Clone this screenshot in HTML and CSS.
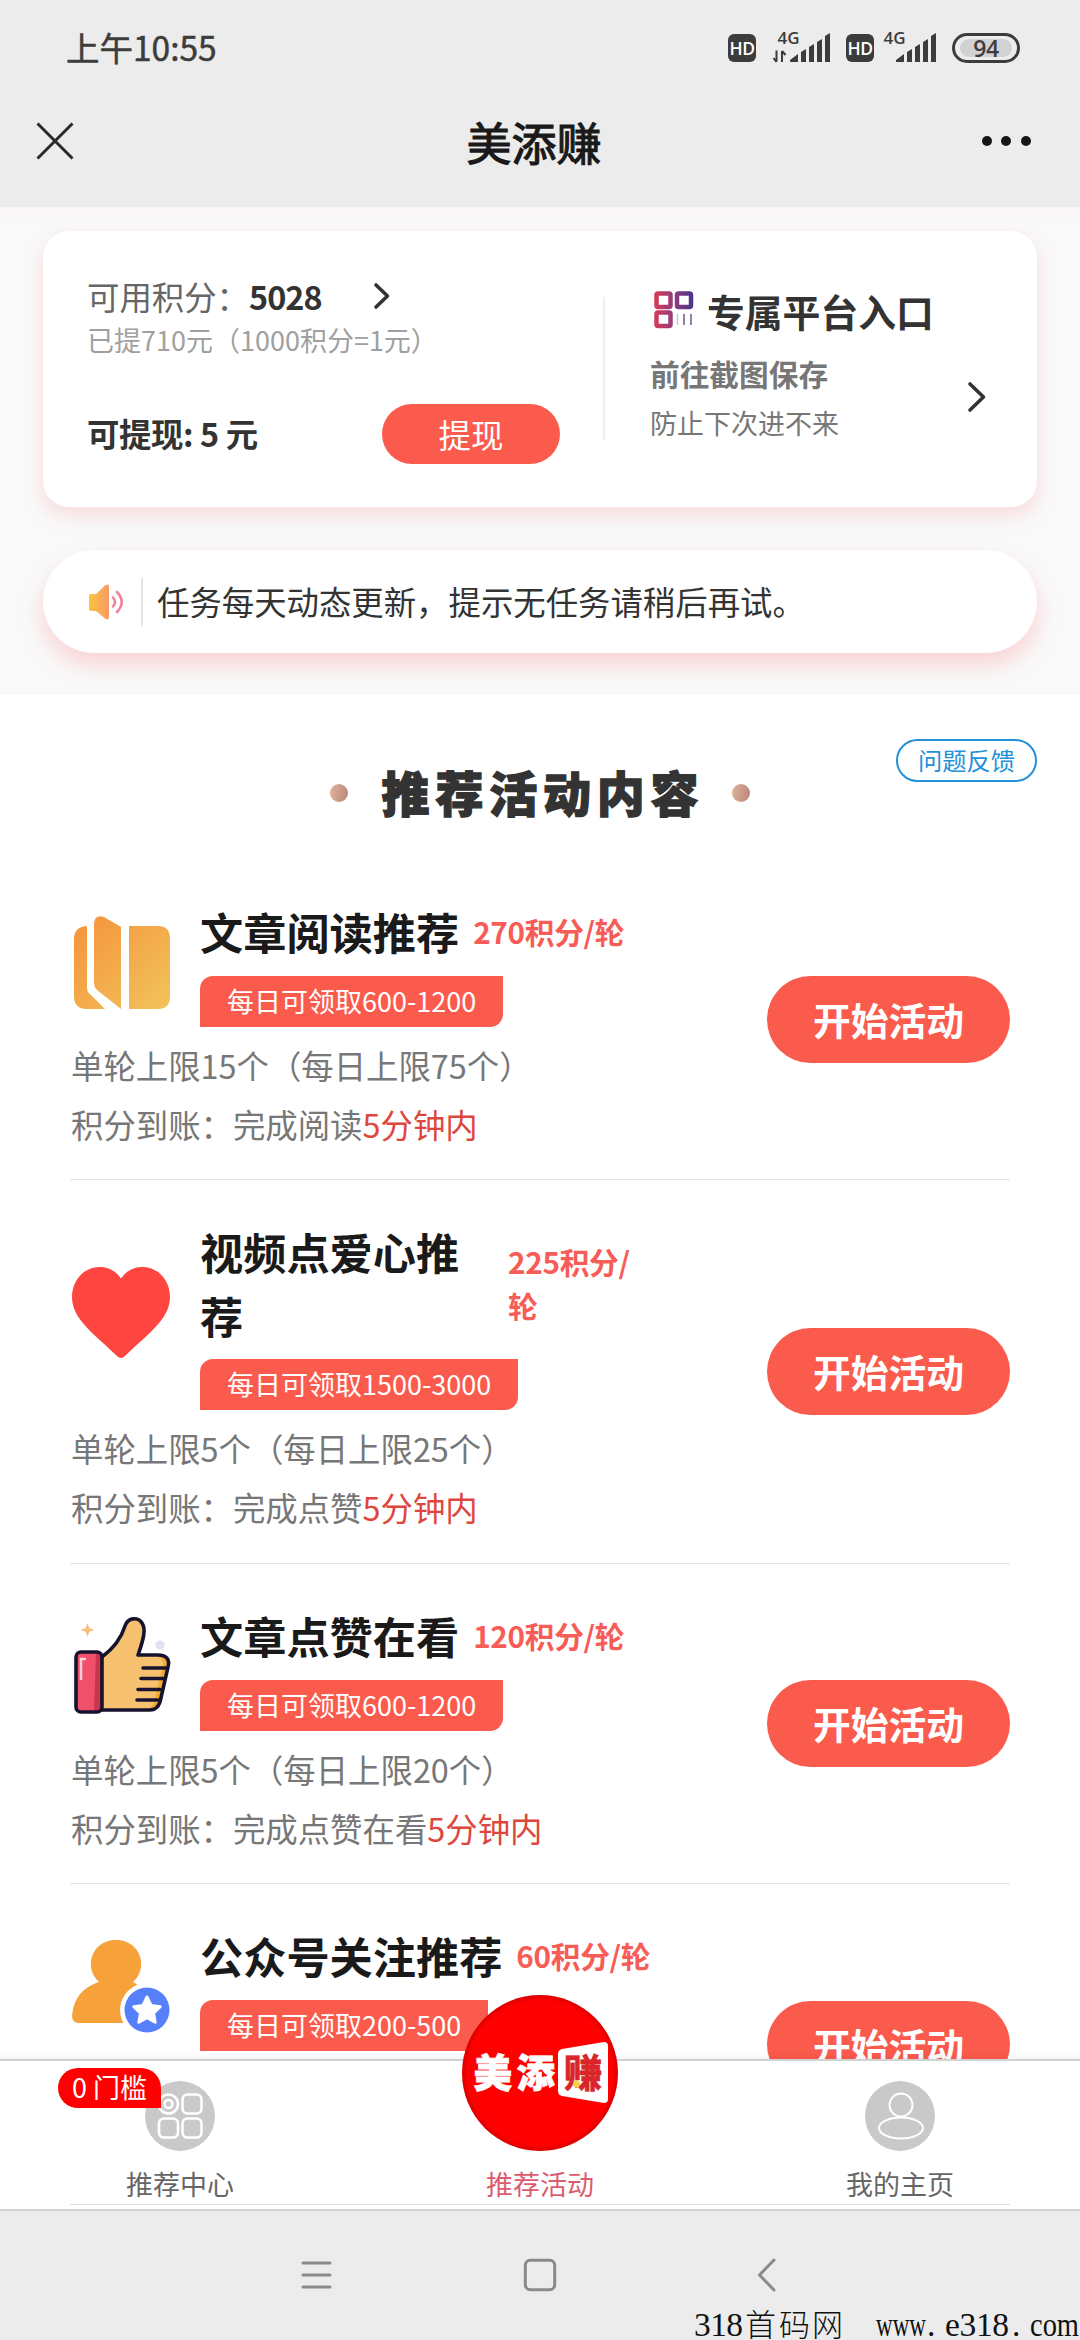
FILE: index.html
```html
<!DOCTYPE html>
<html lang="zh-CN">
<head>
<meta charset="utf-8">
<title>美添赚</title>
<link rel="stylesheet" href="styles.css">
</head>
<body>
<div class="statusbar">
  <span class="clock">上午10:55</span>
  <div class="status-icons">
    <span class="hd">HD</span>
    <svg class="signal" width="62" height="36" viewBox="0 0 62 36">
      <text x="7.500" y="13.500" class="net">4G</text>
      <path d="M6.500 20.500v11M3.500 28l3 4M12 32v-11M15.500 25l-3.500-4" class="arrows"/>
      <path d="M20 32v-2l8-6v8zM31 32v-10l5-3v13zM39 32v-15l5-3v18zM47 32v-20l5-3v23zM55 32v-26l5-3v29z" class="bars"/>
    </svg>
    <span class="hd">HD</span>
    <svg class="signal last" width="62" height="36" viewBox="0 0 62 36">
      <text x="9.500" y="13.500" class="net">4G</text>
      <path d="M22 32v-2l8-6v8zM33 32v-10l5-3v13zM41 32v-15l5-3v18zM49 32v-20l5-3v23zM57 32v-26l5-3v29z" class="bars"/>
    </svg>
    <span class="battery"><span class="level">94</span></span>
  </div>
</div>
<header class="navbar">
  <svg width="38" height="38" viewBox="0 0 38 38"><path d="M1.500 1.500l35 35M36.500 1.500l-35 35" class="close"/></svg>
  <h1>美添赚</h1>
  <div class="dots"><i></i><i></i><i></i></div>
</header>
<section class="hero">
  <div class="card">
    <div class="wallet">
      <div class="points">可用积分：<b>5028</b>
        <svg width="16" height="26" viewBox="0 0 16 26"><path d="M2 2l11.500 11L2 24" class="chev"/></svg>
      </div>
      <div class="taken">已提710元（1000积分=1元）</div>
      <div class="cash"><b>可提现: 5 元</b><button class="withdraw">提现</button></div>
    </div>
    <div class="entry">
      <div>
        <div class="entry-title">
          <svg width="40" height="38" viewBox="0 0 40 38">
            <defs><linearGradient id="qr" gradientUnits="userSpaceOnUse" x1="0" y1="0" x2="40" y2="0"><stop offset="0" stop-color="#d83a55"/><stop offset=".5" stop-color="#8f3c7c"/><stop offset="1" stop-color="#46368c"/></linearGradient></defs>
            <g fill="none" stroke="url(#qr)" stroke-width="4.500"><rect x="2.500" y="2.500" width="14" height="13.500" rx="1.500"/><rect x="23" y="2.500" width="14" height="13.500" rx="1.500"/><rect x="2.500" y="21.500" width="14" height="13.500" rx="1.500"/></g>
            <path d="M23.500 23v11" stroke="#c9c3d8" stroke-width="1.500"/><path d="M30 23v11M37 23v11" stroke="#6d5a8e" stroke-width="1.500"/>
          </svg>专属平台入口</div>
        <div class="entry-sub">前往截图保存</div>
        <div class="entry-note">防止下次进不来</div>
      </div>
      <svg class="go" width="18" height="30" viewBox="0 0 18 30"><path d="M2 2l13.500 13L2 28" class="chev"/></svg>
    </div>
  </div>
  <div class="notice">
    <svg width="36" height="36" viewBox="0 0 36 36">
      <defs><linearGradient id="spk"><stop offset="0" stop-color="#fcc33c"/><stop offset="1" stop-color="#f99a68"/></linearGradient></defs>
      <path d="M2 10h5L16 1.500Q20-1 20 3v30q0 4-4 1.500L7 27H2q-2 0-2-2V12q0-2 2-2z" fill="url(#spk)"/>
      <path d="M24 13.500q4 4.500 0 9M28 8q9.500 10 0 20" fill="none" stroke="#f0829c" stroke-width="2.600" stroke-linecap="round"/>
    </svg>
    <p>任务每天动态更新，提示无任务请稍后再试。</p>
  </div>
</section>
<main>
  <div class="section-head">
    <i class="bead"></i><h2>推荐活动内容</h2><i class="bead"></i>
    <a class="feedback">问题反馈</a>
  </div>
  <article class="task">
    <div class="info">
      <div class="top">
        <svg class="ico" viewBox="0 0 98 98">
          <defs><linearGradient id="bk" gradientUnits="userSpaceOnUse" x1="0" y1="0" x2="98" y2="98"><stop offset="0" stop-color="#f6903a"/><stop offset="1" stop-color="#f1c45c"/></linearGradient></defs>
          <g fill="url(#bk)"><path d="M15 13v62q0 4 3 6l15 15H15Q2 96 2 83V26q0-12 13-13z"/><path d="M22 12q0-11 10-8l17 10v82L25 77q-3-3-3-7z"/><path d="M57 13h29q12 0 12 13v57q0 13-12 13H57z"/></g>
        </svg>
        <div class="desc">
          <div class="name"><h3>文章阅读推荐</h3><span class="reward">270积分/轮</span></div>
          <span class="tag">每日可领取600-1200</span>
        </div>
      </div>
      <p>单轮上限15个（每日上限75个）</p>
      <p>积分到账：完成阅读<em>5分钟内</em></p>
    </div>
    <button class="start">开始活动</button>
  </article>
  <article class="task">
    <div class="info">
      <div class="top">
        <svg class="ico" viewBox="0 0 98 98"><path d="M49 14.500C44 7 36 3 28 3 11 3 0 17 0 33 0 56 24 71 45 92q4 4 8 0C74 71 98 56 98 33 98 17 87 3 70 3 62 3 54 7 49 14.500z" fill="#fe4540"/></svg>
        <div class="desc">
          <div class="name wrap"><h3>视频点爱心推荐</h3><span class="reward">225积分/轮</span></div>
          <span class="tag">每日可领取1500-3000</span>
        </div>
      </div>
      <p>单轮上限5个（每日上限25个）</p>
      <p>积分到账：完成点赞<em>5分钟内</em></p>
    </div>
    <button class="start">开始活动</button>
  </article>
  <article class="task">
    <div class="info">
      <div class="top">
        <svg class="ico" viewBox="0 0 98 98">
          <path d="M15.500 7l1.800 5.200L22.500 14l-5.200 1.800L15.500 21l-1.800-5.200L8.500 14l5.200-1.800z" fill="#f8bd78"/><circle cx="88" cy="29" r="4.500" fill="#e2e0f2"/>
          <path d="M30 41C42 32 49 23 53 10 56 1 66 1 70 7c4 6 2 15-4 32h20c9 0 12 5 10 12l-8 35c-2 6-5 8-10 8H30z" fill="#f7c270"/>
          <path d="M78 41h8q6 1 5 8l-9 38q-2 5-8 6h6q6-1 8-8l8-36q0-8-8-8z" fill="#f1ab31"/>
          <path d="M30 41C42 32 49 23 53 10 56 1 66 1 70 7c4 6 2 15-4 32h20c9 0 12 5 10 12l-8 35c-2 6-5 8-10 8H30" class="ink"/>
          <rect x="4" y="36" width="26" height="60" rx="5" fill="#f1506a"/><path d="M24 37h3q3 1 3 5v49q0 4-4 4h-4z" fill="#c9344f"/><path d="M9 64V43h5" fill="none" stroke="#ffd0d5" stroke-width="2.500"/>
          <rect x="4" y="36" width="26" height="60" rx="5" class="ink"/>
          <path d="M71 52h23M69 62.500h22M66 73.500h22M65 84h21" class="ink"/>
        </svg>
        <div class="desc">
          <div class="name"><h3>文章点赞在看</h3><span class="reward">120积分/轮</span></div>
          <span class="tag">每日可领取600-1200</span>
        </div>
      </div>
      <p>单轮上限5个（每日上限20个）</p>
      <p>积分到账：完成点赞在看<em>5分钟内</em></p>
    </div>
    <button class="start">开始活动</button>
  </article>
  <article class="task">
    <div class="info">
      <div class="top">
        <svg class="ico" viewBox="0 0 98 98">
          <path d="M44 3a24 24 0 0 1 17 42q8 3 9 16L58 86H7q-7 0-7-7Q2 53 27 45A24 24 0 0 1 44 3z" fill="#f6a139"/>
          <circle cx="75" cy="73" r="27" fill="#fff"/><circle cx="75" cy="73" r="22.500" fill="#5680fa"/>
          <path d="M75 60l4 8.500 9.200 1.200-6.700 6.400 1.700 9.200-8.200-4.500-8.200 4.500 1.700-9.200-6.700-6.400 9.200-1.200z" fill="#fff" stroke="#fff" stroke-width="3" stroke-linejoin="round"/>
        </svg>
        <div class="desc">
          <div class="name"><h3>公众号关注推荐</h3><span class="reward">60积分/轮</span></div>
          <span class="tag">每日可领取200-500</span>
        </div>
      </div>
    </div>
    <button class="start">开始活动</button>
  </article>
</main>
<nav class="tabbar">
  <a class="tab"><span class="badge">0 门槛</span>
    <svg width="70" height="70" viewBox="0 0 70 70"><circle cx="35" cy="35" r="35" fill="#c9c9c9"/><g fill="none" stroke="#fff" stroke-width="2.600"><circle cx="23.500" cy="23" r="9.500"/><circle cx="23.500" cy="23" r="4"/><rect x="37.500" y="13.500" width="19" height="19" rx="5"/><rect x="14" y="37.500" width="19" height="19" rx="5"/><rect x="37.500" y="37.500" width="19" height="19" rx="5"/></g></svg>
    <span>推荐中心</span></a>
  <a class="tab active">
    <svg class="logo" width="156" height="156" viewBox="0 0 156 156">
      <defs><radialGradient id="lg"><stop offset=".93" stop-color="#fe0000"/><stop offset="1" stop-color="#d90000"/></radialGradient></defs>
      <circle cx="78" cy="78" r="78" fill="url(#lg)"/>
      <path d="M100 54l42-7q4 0 4 4v53q0 4-4 4l-42-7q-4-1-4-5V59q0-4 4-5z" fill="#fff"/>
      <text x="11.500 54.500" y="91.500" class="logo-text">美添</text>
      <text x="102" y="91.500" class="logo-text red">赚</text>
      <circle cx="114.500" cy="89" r="3.500" fill="#f4d548"/>
    </svg>
    <span>推荐活动</span></a>
  <a class="tab">
    <svg width="70" height="70" viewBox="0 0 70 70"><circle cx="35" cy="35" r="35" fill="#c9c9c9"/><g fill="none" stroke="#fff" stroke-width="2"><circle cx="36" cy="24" r="11.500"/><ellipse cx="36" cy="47" rx="22" ry="10.500"/></g></svg>
    <span>我的主页</span></a>
</nav>
<div class="sysnav">
  <svg width="34" height="34" viewBox="0 0 34 34"><path d="M4 5h27M4 17h27M4 29h27"/></svg>
  <svg width="34" height="34" viewBox="0 0 34 34"><rect x="2.300" y="2.300" width="29.400" height="29.400" rx="5"/></svg>
  <svg width="34" height="34" viewBox="0 0 34 34"><path d="M27 2L12.500 17 27 32"/></svg>
  <svg class="watermark" width="386" height="32" viewBox="0 0 386 32">
    <text x="0" y="28" textLength="49">318</text><text x="51 85 118" y="28" class="cjk">首码网</text>
    <text x="182" y="28" textLength="50" lengthAdjust="spacingAndGlyphs">www</text><text x="233" y="28">.</text><text x="251" y="28" textLength="64">e318</text><text x="318" y="28">.</text><text x="336" y="28" textLength="49" lengthAdjust="spacingAndGlyphs">com</text>
  </svg>
</div>
</body>
</html>
```
FILE: styles.css
```css
* { box-sizing: border-box; margin: 0; padding: 0; }
body {
  width: 1080px; height: 2340px; overflow: hidden;
  display: flex; flex-direction: column;
  background: #fff; color: #333;
  font-family: "Noto Sans CJK SC", sans-serif; font-size: 32.4px;
}
svg { display: block; flex: none; overflow: visible; }
button { border: 0; font-family: inherit; color: #fff; background: #fb5b4d; }
i, em { font-style: normal; }

.statusbar { height: 94px; padding: 0 60px 0 66px; background: #ececec; display: flex; align-items: center; justify-content: space-between; flex: none; color: #3c3c3c; }
.clock { font-size: 33.5px; line-height: 40px; -webkit-text-stroke: .5px #3c3c3c; }
.status-icons { display: flex; align-items: center; padding-top: 2px; }
.hd { width: 28px; height: 28px; border-radius: 6px; background: #3c3c3c; color: #fff; font: 600 17.5px/28px "Open Sans", sans-serif; text-align: center; letter-spacing: -.5px; }
.signal { margin: 0 14px; }
.signal.last { margin: 0 16px 0 0; }
.net { font: 600 17px "Open Sans", sans-serif; fill: #3c3c3c; }
.arrows { fill: none; stroke: #3c3c3c; stroke-width: 2; }
.bars { fill: #3c3c3c; }
.battery { width: 68px; height: 30px; border: 3px solid #3c3c3c; border-radius: 15px; padding: 3px 5px; }
.level { display: block; height: 18px; border-radius: 9px; background: #d2d2d2; font: 600 23px/18px "Open Sans", sans-serif; text-align: center; letter-spacing: -.5px; }

.navbar { height: 113px; padding: 0 49px 19px 36px; background: #ececec; display: flex; align-items: center; justify-content: space-between; flex: none; }
.close { stroke: #2a2a2a; stroke-width: 3; fill: none; }
.navbar h1 { font-size: 45px; line-height: 60px; font-weight: 400; -webkit-text-stroke: 1.200px #1a1a1a; color: #1a1a1a; padding: 2px 0 0 12px; }
.dots { display: flex; gap: 9.500px; }
.dots i { width: 10px; height: 10px; border-radius: 50%; background: #161616; }

.hero { height: 488px; flex: none; padding: 24px 43px 0; background: linear-gradient(#faf5f5, #f9f9f9 14px); }
.card { height: 276px; border-radius: 26px; background: #fff; box-shadow: 0 8px 20px rgba(250, 90, 95, .19); display: flex; }
.wallet { width: 562px; padding: 43px 45px 0 44px; display: flex; flex-direction: column; position: relative; }
.wallet::after { content: ""; position: absolute; right: 0; top: 66px; width: 2px; height: 143px; background: #eee; }
.points { display: flex; align-items: center; line-height: 44px; color: #666; }
.points b { color: #333; letter-spacing: -.9px; }
.points svg { margin-left: 52px; }
.taken { margin-top: 2px; font-size: 27px; line-height: 40px; color: #a0a0a0; }
.cash { display: flex; justify-content: space-between; align-items: center; margin-top: 44px; line-height: 58px; }
.cash b { letter-spacing: -.400px; margin-top: -2px; }
.withdraw { width: 178px; height: 60px; border-radius: 30px; font-size: 32.4px; line-height: 58px; }
.chev { fill: none; stroke: #333; stroke-width: 3.600; stroke-linecap: round; stroke-linejoin: round; }
.entry { flex: 1; display: flex; justify-content: space-between; padding: 52px 51px 0 45px; }
.entry-title { display: flex; align-items: center; gap: 13px; margin-left: 4px; font-size: 37.8px; line-height: 56px; font-weight: bold; }
.entry-title svg { margin-top: -2px; }
.entry-sub { margin-top: 13px; font-size: 29.7px; line-height: 44px; font-weight: bold; color: #777; }
.entry-note { margin-top: 7px; font-size: 27px; line-height: 40px; color: #777; }
.go { margin-top: 99px; }
.notice { height: 103px; margin-top: 43px; border-radius: 52px; background: #fff; box-shadow: 0 12px 22px rgba(250, 90, 95, .23); padding-left: 46px; display: flex; align-items: center; }
.notice p { margin-left: 16px; padding: 0 0 2px 14px; border-left: 2px solid #e4e4e4; line-height: 46px; }

main { flex: 1; min-height: 0; overflow: hidden; padding: 0 70px; }
.section-head { height: 165px; position: relative; display: flex; justify-content: center; align-items: center; padding-top: 30px; }
.section-head h2 { font-size: 48px; line-height: 60px; font-weight: 900; letter-spacing: 5.800px; -webkit-text-stroke: 1.300px #333; margin: 0 28px 4px 34px; }
.bead { width: 18px; height: 18px; border-radius: 50%; background: linear-gradient(100deg, #dfb49c, #bb8476); }
.feedback { position: absolute; right: -27px; top: 44px; width: 141px; height: 43px; border: 2px solid #2490d8; border-radius: 22px; color: #2490d8; font-size: 24.300px; line-height: 38px; text-align: center; }
.task { border-bottom: 1px solid #e2e2e2; padding: 42px 0 26px 2px; display: flex; align-items: center; justify-content: space-between; color: #777; }
.task:last-child { height: 320px; align-items: flex-start; }
.task:last-child .start { margin-top: 75px; }
.top { display: flex; align-items: center; margin-bottom: 9px; }
.ico { width: 98px; height: 98px; margin: 0 30px 6px 0; }
.ink { fill: none; stroke: #17132f; stroke-width: 3.600; stroke-linejoin: round; stroke-linecap: round; }
.name { display: flex; align-items: center; gap: 14px; margin-bottom: 10px; }
.name h3 { font-size: 43.2px; line-height: 64px; font-weight: bold; color: #1a1a1a; position: relative; top: -3px; }
.name.wrap h3 { width: 294px; padding-right: 20px; line-height: 63.500px; top: -2px; }
.name.wrap .reward { width: 140px; }
.reward { font-size: 29.700px; line-height: 43.500px; font-weight: bold; color: #f75c57; margin-top: -4px; letter-spacing: -.3px; }
.tag { display: inline-block; vertical-align: top; height: 51px; padding: 0 27px; border-radius: 13px 0; background: #fb5b4d; color: #fff; font-size: 27px; line-height: 49px; }
.info p { line-height: 58.700px; margin-left: -1px; }
.info em { color: #de473e; }
.start { width: 243px; height: 87px; border-radius: 44px; font-size: 37.800px; line-height: 84px; font-weight: bold; margin-top: -17px; }

.tabbar { height: 152px; flex: none; position: relative; display: grid; grid-template: 100% / repeat(3, 1fr); border-top: 2px solid #d2d2d2; border-bottom: 2px solid #d2d2d2; background: #fff; box-shadow: 0 -2px 6px rgba(0, 0, 0, .06); }
.tabbar::after { content: ""; position: absolute; left: 70px; right: 70px; bottom: 4px; height: 1px; background: #dedede; }
.tab { min-height: 0; position: relative; display: flex; flex-direction: column; align-items: center; justify-content: flex-end; padding-bottom: 4px; gap: 12px; font-size: 27px; line-height: 42px; color: #666; }
.tab.active { color: #dc5b6f; }
.badge { position: absolute; left: 58px; top: 7px; width: 103px; height: 40px; border-radius: 20px 20px 0 20px; background: #f00; color: #fff; line-height: 38px; text-align: center; z-index: 1; }
.logo-text { font-size: 38.500px; font-weight: 900; fill: #fff; stroke: #fff; stroke-width: .8; }
.logo-text.red { fill: #d8262a; stroke: #d8262a; stroke-width: .4; }

.sysnav { height: 129px; flex: none; position: relative; background: #ececec; display: flex; justify-content: center; gap: 190px; padding-top: 47px; fill: none; stroke: #8a8a8a; stroke-width: 3; stroke-linecap: round; stroke-linejoin: round; }
.watermark { position: absolute; right: 0; bottom: 0; fill: #111; stroke: none; font: 33.500px "Liberation Serif", serif; }
.watermark .cjk { font: 300 31px "Noto Sans CJK SC", sans-serif; }
```
